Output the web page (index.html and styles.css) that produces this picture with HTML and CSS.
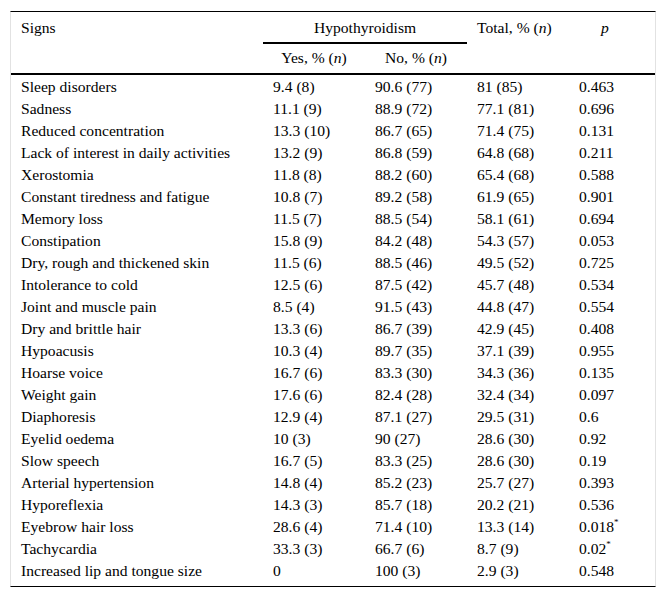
FILE: index.html
```html
<!DOCTYPE html>
<html lang="en">
<head>
<meta charset="utf-8">
<title>Signs and hypothyroidism</title>
<link rel="stylesheet" href="styles.css">
</head>
<body>
<div class="frame">
<table class="data">
<colgroup>
<col class="c-sign"><col class="c-num"><col class="c-num"><col class="c-num"><col class="c-p">
</colgroup>
<thead>
<tr>
<th rowspan="2" class="h-left">Signs</th>
<th colspan="2" class="h-group">Hypothyroidism</th>
<th rowspan="2" class="h-total">Total, % (<i>n</i>)</th>
<th rowspan="2" class="h-p"><i>p</i></th>
</tr>
<tr>
<th class="h-sub">Yes, % (<i>n</i>)</th>
<th class="h-sub">No, % (<i>n</i>)</th>
</tr>
</thead>
<tbody>
<tr><td>Sleep disorders</td><td>9.4 (8)</td><td>90.6 (77)</td><td>81 (85)</td><td>0.463</td></tr>
<tr><td>Sadness</td><td>11.1 (9)</td><td>88.9 (72)</td><td>77.1 (81)</td><td>0.696</td></tr>
<tr><td>Reduced concentration</td><td>13.3 (10)</td><td>86.7 (65)</td><td>71.4 (75)</td><td>0.131</td></tr>
<tr><td>Lack of interest in daily activities</td><td>13.2 (9)</td><td>86.8 (59)</td><td>64.8 (68)</td><td>0.211</td></tr>
<tr><td>Xerostomia</td><td>11.8 (8)</td><td>88.2 (60)</td><td>65.4 (68)</td><td>0.588</td></tr>
<tr><td>Constant tiredness and fatigue</td><td>10.8 (7)</td><td>89.2 (58)</td><td>61.9 (65)</td><td>0.901</td></tr>
<tr><td>Memory loss</td><td>11.5 (7)</td><td>88.5 (54)</td><td>58.1 (61)</td><td>0.694</td></tr>
<tr><td>Constipation</td><td>15.8 (9)</td><td>84.2 (48)</td><td>54.3 (57)</td><td>0.053</td></tr>
<tr><td>Dry, rough and thickened skin</td><td>11.5 (6)</td><td>88.5 (46)</td><td>49.5 (52)</td><td>0.725</td></tr>
<tr><td>Intolerance to cold</td><td>12.5 (6)</td><td>87.5 (42)</td><td>45.7 (48)</td><td>0.534</td></tr>
<tr><td>Joint and muscle pain</td><td>8.5 (4)</td><td>91.5 (43)</td><td>44.8 (47)</td><td>0.554</td></tr>
<tr><td>Dry and brittle hair</td><td>13.3 (6)</td><td>86.7 (39)</td><td>42.9 (45)</td><td>0.408</td></tr>
<tr><td>Hypoacusis</td><td>10.3 (4)</td><td>89.7 (35)</td><td>37.1 (39)</td><td>0.955</td></tr>
<tr><td>Hoarse voice</td><td>16.7 (6)</td><td>83.3 (30)</td><td>34.3 (36)</td><td>0.135</td></tr>
<tr><td>Weight gain</td><td>17.6 (6)</td><td>82.4 (28)</td><td>32.4 (34)</td><td>0.097</td></tr>
<tr><td>Diaphoresis</td><td>12.9 (4)</td><td>87.1 (27)</td><td>29.5 (31)</td><td>0.6</td></tr>
<tr><td>Eyelid oedema</td><td>10 (3)</td><td>90 (27)</td><td>28.6 (30)</td><td>0.92</td></tr>
<tr><td>Slow speech</td><td>16.7 (5)</td><td>83.3 (25)</td><td>28.6 (30)</td><td>0.19</td></tr>
<tr><td>Arterial hypertension</td><td>14.8 (4)</td><td>85.2 (23)</td><td>25.7 (27)</td><td>0.393</td></tr>
<tr><td>Hyporeflexia</td><td>14.3 (3)</td><td>85.7 (18)</td><td>20.2 (21)</td><td>0.536</td></tr>
<tr><td>Eyebrow hair loss</td><td>28.6 (4)</td><td>71.4 (10)</td><td>13.3 (14)</td><td>0.018<sup class="sig">*</sup></td></tr>
<tr><td>Tachycardia</td><td>33.3 (3)</td><td>66.7 (6)</td><td>8.7 (9)</td><td>0.02<sup class="sig">*</sup></td></tr>
<tr><td>Increased lip and tongue size</td><td>0</td><td>100 (3)</td><td>2.9 (3)</td><td>0.548</td></tr>
</tbody>
</table>
</div>
</body>
</html>
```

FILE: styles.css
```css
html, body {
  margin: 0;
  padding: 0;
  background: #fff;
}

body {
  font-family: "Liberation Serif", "Times New Roman", serif;
  font-size: 15.6px;
  color: #000;
}

.frame {
  box-sizing: border-box;
  width: 646px;
  margin: 11px 0 0 10px;
  border-top: 1px solid #000;
  border-bottom: 1px solid #000;
  border-left: 1px solid #e2e2e2;
  border-right: 1px solid #e2e2e2;
  padding-bottom: 5px;
}

.data {
  border-collapse: separate;
  border-spacing: 0;
  width: 100%;
  table-layout: fixed;
}

.c-sign { width: 252px; }
.c-num { width: 102px; }
.c-p { width: auto; }

.data th {
  font-weight: normal;
  line-height: 17px;
  text-align: left;
  vertical-align: top;
  padding: 7px 10px 6px;
}

.data .h-left {
  padding-left: 10px;
}

.data .h-group {
  text-align: center;
  border-bottom: 2px solid #000;
  padding: 7px 0 6px;
}

.data .h-sub {
  text-align: center;
  padding: 5px 0 7px;
}

.data .h-total {
  text-align: left;
  padding-left: 10px;
}

.data .h-p {
  text-align: center;
  padding-left: 10px;
  padding-right: 24px;
}

.data td {
  line-height: 17px;
  padding: 3px 10px 2px;
  white-space: nowrap;
  text-align: left;
}

.data tbody tr:first-child td {
  border-top: 2px solid #000;
}

.sig {
  font-size: 9px;
  line-height: 0;
  vertical-align: 7px;
}
```
